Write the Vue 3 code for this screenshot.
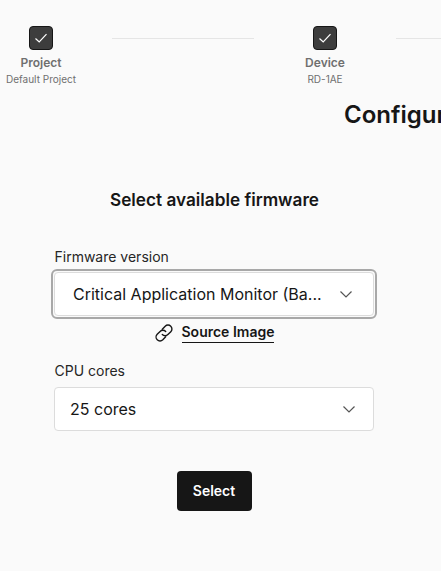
<script setup>
const steps = [
  { title: 'Project', sub: 'Default Project' },
  { title: 'Device', sub: 'RD-1AE' },
]
</script>

<template>
  <div class="page">
    <div class="stepper">
      <template v-for="s in steps" :key="s.title">
        <div class="step">
          <div class="box">
            <svg width="14" height="14" viewBox="0 0 14 14" fill="none">
              <path d="M1.500 7.500 5.200 11 12.500 3.200" stroke="#fff" stroke-width="1.200" />
            </svg>
          </div>
          <div class="step-title">{{ s.title }}</div>
          <div class="step-sub">{{ s.sub }}</div>
        </div>
        <div class="line"></div>
      </template>
    </div>
    <h1 class="heading">Configure</h1>
    <h2 class="sub">Select available firmware</h2>
    <div class="form">
      <label class="label">Firmware version</label>
      <div class="focus-ring">
        <div class="select inner">
          <span class="value">Critical Application Monitor (Ba...</span>
          <svg class="chev" width="14" height="14" viewBox="0 0 14 14" fill="none">
            <path d="M1.500 4.500 7 10l5.500-5.500" stroke="#555" stroke-width="1.200" />
          </svg>
        </div>
      </div>
      <div class="source">
        <svg width="20" height="20" viewBox="0 0 20 20" fill="none" stroke="#161616" stroke-width="1.400" stroke-linecap="round">
          <path d="M8.300 6.300 11.200 3.200a3.900 3.900 0 0 1 5.600 5.500L13.900 11.600a3.900 3.900 0 0 1-5.600 0" />
          <path d="M11.700 13.700 8.800 16.800a3.900 3.900 0 0 1-5.600-5.500L6.100 8.400a3.900 3.900 0 0 1 5.600 0" />
        </svg>
        <a class="source-link">Source Image</a>
      </div>
      <label class="label second">CPU cores</label>
      <div class="select plain">
        <span class="value">25 cores</span>
        <svg class="chev" width="14" height="14" viewBox="0 0 14 14" fill="none">
          <path d="M1.500 4.500 7 10l5.500-5.500" stroke="#555" stroke-width="1.200" />
        </svg>
      </div>
      <div class="actions">
        <button class="btn">Select</button>
      </div>
    </div>
  </div>
</template>

<style>
html, body { margin: 0; padding: 0; background: #fafafa; overflow: hidden; }
</style>

<style scoped>
.page {
  width: 441px;
  height: 571px;
  overflow: hidden;
  background: #fafafa;
  font-family: Inter, "Liberation Sans", sans-serif;
  color: #161616;
}
.stepper {
  display: flex;
  align-items: flex-start;
  width: 800px;
  padding-top: 26px;
}
.step {
  width: 82px;
  flex: none;
  display: flex;
  flex-direction: column;
  align-items: center;
}
.box {
  width: 24px;
  height: 24px;
  box-sizing: border-box;
  background: #3d3d3d;
  border: 1px solid #161616;
  border-radius: 4px;
  display: flex;
  align-items: center;
  justify-content: center;
}
.step-title {
  margin-top: 5px;
  font-size: 12px;
  line-height: 16px;
  font-weight: 600;
  color: #6f6f6f;
}
.step-sub {
  font-size: 10px;
  line-height: 16px;
  color: #6f6f6f;
  white-space: nowrap;
}
.line {
  flex: none;
  width: 142px;
  height: 1px;
  margin: 12px 30px 0;
  background: #e5e5e5;
}
.heading {
  margin: 12px 0 0 344px;
  font-size: 24px;
  line-height: 32px;
  font-weight: 600;
  white-space: nowrap;
}
.sub {
  margin: 57px 0 0;
  width: 429px;
  text-align: center;
  font-size: 17.200px;
  line-height: 24px;
  font-weight: 600;
}
.form {
  margin: 35px 0 0 54px;
  width: 320px;
}
.label {
  display: block;
  padding-left: 0.500px;
  font-size: 14px;
  line-height: 20px;
  color: #262626;
}
.focus-ring {
  margin: 2px 0 0 -3px;
  width: 326px;
  box-sizing: border-box;
  border: 2px solid #a8a8a8;
  border-radius: 6px;
  padding: 1px;
}
.select {
  box-sizing: border-box;
  background: #fff;
  border: 1px solid #dcdcdc;
  border-radius: 4px;
  display: flex;
  align-items: center;
  justify-content: space-between;
  height: 44px;
  font-size: 16px;
}
.inner { padding: 0 20px 0 18px; }
.plain { padding: 0 17px 0 15px; }
.value { white-space: nowrap; }
.source {
  display: flex;
  align-items: center;
  justify-content: center;
  gap: 8px;
  margin-top: 4px;
  height: 20px;
}
.source-link {
  font-size: 14px;
  line-height: 16px;
  padding-bottom: 2px;
  font-weight: 600;
  border-bottom: 1px solid #161616;
}
.second { margin-top: 18px; }
.plain { margin-top: 6px; }
.actions {
  display: flex;
  justify-content: center;
  margin-top: 40px;
}
.btn {
  width: 75px;
  height: 40px;
  padding: 0 0 2px;
  border: none;
  border-radius: 4px;
  background: #161616;
  color: #fff;
  font-family: inherit;
  font-size: 14px;
  font-weight: 600;
}
</style>
